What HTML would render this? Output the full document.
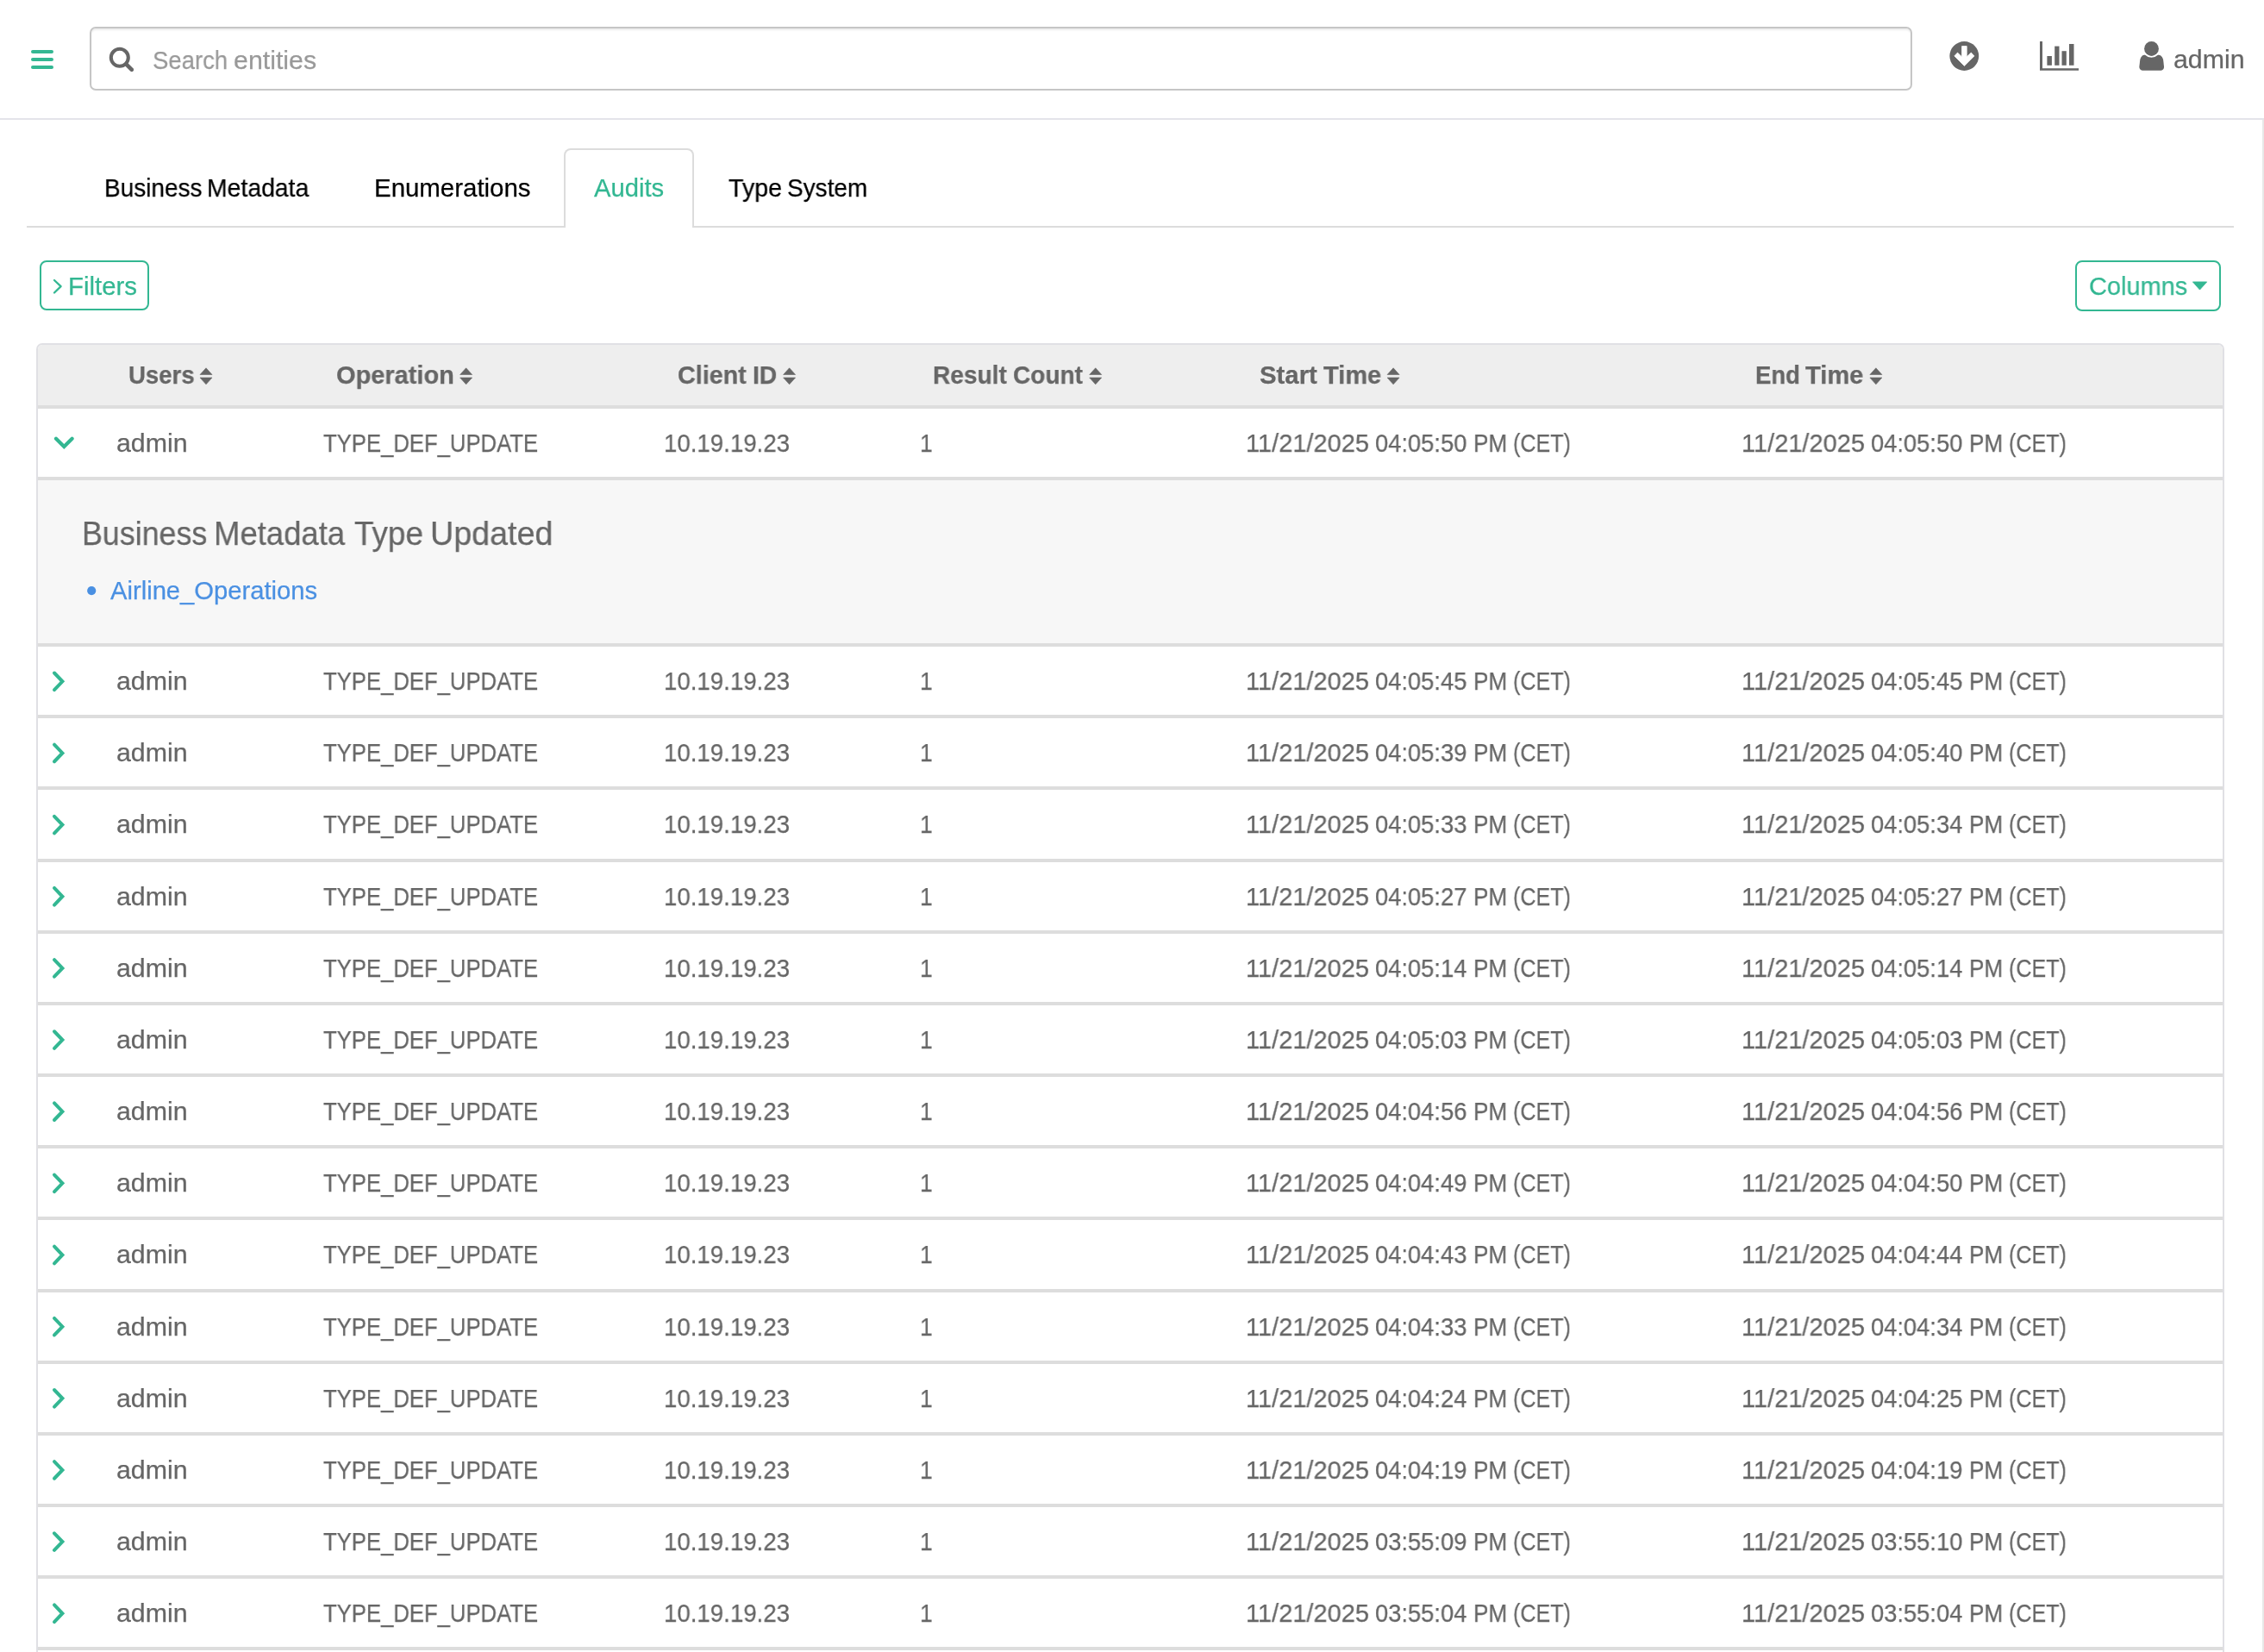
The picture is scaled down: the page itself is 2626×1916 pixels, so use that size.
<!DOCTYPE html>
<html><head><meta charset="utf-8"><title>Audits</title>
<style>
html,body{margin:0;padding:0;width:2626px;height:1916px;overflow:hidden;background:#fff}
body{position:relative;font-family:"Liberation Sans",sans-serif}
.a{position:absolute}
.t{position:absolute;line-height:0;white-space:pre;transform-origin:0 0;will-change:transform;-webkit-text-stroke:0.25px currentColor}
svg{position:absolute;left:0;top:0}
</style></head><body>
<div class="a" style="left:0px;top:137px;width:2626px;height:2px;background:#e4e4ea"></div>
<div class="a" style="left:2624px;top:139px;width:2px;height:1777px;background:#e8e8e8"></div>
<div class="a" style="left:35.7px;top:58px;width:26.1px;height:4.3px;background:#33b792;border-radius:2px"></div>
<div class="a" style="left:35.7px;top:66.8px;width:26.1px;height:4.3px;background:#33b792;border-radius:2px"></div>
<div class="a" style="left:35.7px;top:75.6px;width:26.1px;height:4.3px;background:#33b792;border-radius:2px"></div>
<div class="a" style="left:104px;top:31.4px;width:2114px;height:74px;box-sizing:border-box;border:2px solid #c6c6c6;border-radius:7px;background:#fff;box-shadow:inset 0 2px 2px rgba(0,0,0,.075)"></div>
<div class="a" style="left:31px;top:262px;width:2560px;height:2px;background:#dcdcdc"></div>
<div class="a" style="left:654px;top:172px;width:151px;height:92px;box-sizing:border-box;border:2px solid #dcdcdc;border-bottom:0;border-radius:8px 8px 0 0;background:#fff"></div>
<div class="a" style="left:46px;top:302px;width:127px;height:58.4px;box-sizing:border-box;border:2px solid #33b792;border-radius:8px"></div>
<div class="a" style="left:2407.2px;top:302px;width:168.60000000000036px;height:58.69999999999999px;box-sizing:border-box;border:2px solid #33b792;border-radius:8px"></div>
<div class="a" style="left:42px;top:398px;width:2538px;height:1528px;box-sizing:border-box;border:2px solid #e0e0e4;border-bottom:0;border-radius:7px 7px 0 0;background:#fff"></div>
<div class="a" style="left:44px;top:400px;width:2534px;height:70px;background:#eee;border-radius:5px 5px 0 0"></div>
<div class="a" style="left:44px;top:470px;width:2534px;height:4px;background:#ddd"></div>
<div class="a" style="left:44px;top:553px;width:2534px;height:4px;background:#ddd"></div>
<div class="a" style="left:44px;top:557px;width:2534px;height:189px;background:#f7f7f7"></div>
<div class="a" style="left:44px;top:746px;width:2534px;height:4px;background:#ddd"></div>
<div class="a" style="left:44px;top:829.3px;width:2534px;height:4px;background:#ddd"></div>
<div class="a" style="left:44px;top:912.45px;width:2534px;height:4px;background:#ddd"></div>
<div class="a" style="left:44px;top:995.6px;width:2534px;height:4px;background:#ddd"></div>
<div class="a" style="left:44px;top:1078.75px;width:2534px;height:4px;background:#ddd"></div>
<div class="a" style="left:44px;top:1161.9px;width:2534px;height:4px;background:#ddd"></div>
<div class="a" style="left:44px;top:1245.05px;width:2534px;height:4px;background:#ddd"></div>
<div class="a" style="left:44px;top:1328.2px;width:2534px;height:4px;background:#ddd"></div>
<div class="a" style="left:44px;top:1411.35px;width:2534px;height:4px;background:#ddd"></div>
<div class="a" style="left:44px;top:1494.5px;width:2534px;height:4px;background:#ddd"></div>
<div class="a" style="left:44px;top:1577.65px;width:2534px;height:4px;background:#ddd"></div>
<div class="a" style="left:44px;top:1660.8px;width:2534px;height:4px;background:#ddd"></div>
<div class="a" style="left:44px;top:1743.95px;width:2534px;height:4px;background:#ddd"></div>
<div class="a" style="left:44px;top:1827.1px;width:2534px;height:4px;background:#ddd"></div>
<div class="a" style="left:44px;top:1910.25px;width:2534px;height:4px;background:#ddd"></div>
<svg width="2626" height="1916" viewBox="0 0 2626 1916">
<circle cx="138.8" cy="66.8" r="10" fill="none" stroke="#666" stroke-width="4.1"/>
<line x1="146.3" y1="74.3" x2="152.8" y2="80.8" stroke="#666" stroke-width="4.6" stroke-linecap="round"/>
<circle cx="2278.3" cy="65" r="16.9" fill="#666"/>
<path d="M2275.6 53.6 L2275.6 65.9 L2270.5 61.1 L2266.9 64.9 L2278.4 76.4 L2289.9 64.9 L2286.3 61.1 L2281.2 65.9 L2281.2 53.6 Z" fill="#fff" stroke="#fff" stroke-width="0.8" stroke-linejoin="round"/>
<path d="M2366 48 H2369 V79.2 H2411 V81.8 H2366 Z" fill="#666"/>
<rect x="2374.4" y="65" width="5.5" height="10.8" fill="#666"/>
<rect x="2383.2" y="53.6" width="5.3" height="22.2" fill="#666"/>
<rect x="2391.5" y="59.2" width="5.3" height="16.6" fill="#666"/>
<rect x="2400" y="51" width="5.5" height="24.8" fill="#666"/>
<path d="M2488.5 63.6 H2502.5 C2506.5 63.6 2508.6 66.5 2509.2 70 L2510 77 C2510.3 80 2508.5 81.8 2505.5 81.8 H2486 C2483 81.8 2481.1 80 2481.4 77 L2482.2 70 C2482.9 66.5 2484.5 63.6 2488.5 63.6 Z" fill="#666"/>
<circle cx="2495.5" cy="56.4" r="9.4" fill="none" stroke="#fff" stroke-width="2"/>
<circle cx="2495.5" cy="56.4" r="8.4" fill="#666"/>
<path d="M63 325 L70.6 332.2 L63 339.5" fill="none" stroke="#33b792" stroke-width="2.3" stroke-linecap="round" stroke-linejoin="round"/>
<path d="M2543.4 326.9 H2559.7 L2551.5 336.1 Z" fill="#33b792" stroke="#33b792" stroke-width="0.8" stroke-linejoin="round"/>
<path d="M232 434.5 L239 426.8 L246 434.5 Z M232 438 L239 445.8 L246 438 Z" fill="#666" stroke="#666" stroke-width="0.6" stroke-linejoin="round"/>
<path d="M533.6 434.5 L540.6 426.8 L547.6 434.5 Z M533.6 438 L540.6 445.8 L547.6 438 Z" fill="#666" stroke="#666" stroke-width="0.6" stroke-linejoin="round"/>
<path d="M908.6 434.5 L915.6 426.8 L922.6 434.5 Z M908.6 438 L915.6 445.8 L922.6 438 Z" fill="#666" stroke="#666" stroke-width="0.6" stroke-linejoin="round"/>
<path d="M1263.7 434.5 L1270.7 426.8 L1277.7 434.5 Z M1263.7 438 L1270.7 445.8 L1277.7 438 Z" fill="#666" stroke="#666" stroke-width="0.6" stroke-linejoin="round"/>
<path d="M1609.1 434.5 L1616.1 426.8 L1623.1 434.5 Z M1609.1 438 L1616.1 445.8 L1623.1 438 Z" fill="#666" stroke="#666" stroke-width="0.6" stroke-linejoin="round"/>
<path d="M2168.9 434.5 L2175.9 426.8 L2182.9 434.5 Z M2168.9 438 L2175.9 445.8 L2182.9 438 Z" fill="#666" stroke="#666" stroke-width="0.6" stroke-linejoin="round"/>
<path d="M65 508.7 L74.3 518 L83.6 508.7" fill="none" stroke="#33b792" stroke-width="4.2" stroke-linecap="round" stroke-linejoin="miter"/>
<path d="M63 780.50 L72.4 790.30 L63 800.10" fill="none" stroke="#33b792" stroke-width="4" stroke-linecap="round"/>
<path d="M63 863.65 L72.4 873.45 L63 883.25" fill="none" stroke="#33b792" stroke-width="4" stroke-linecap="round"/>
<path d="M63 946.80 L72.4 956.60 L63 966.40" fill="none" stroke="#33b792" stroke-width="4" stroke-linecap="round"/>
<path d="M63 1029.95 L72.4 1039.75 L63 1049.55" fill="none" stroke="#33b792" stroke-width="4" stroke-linecap="round"/>
<path d="M63 1113.10 L72.4 1122.90 L63 1132.70" fill="none" stroke="#33b792" stroke-width="4" stroke-linecap="round"/>
<path d="M63 1196.25 L72.4 1206.05 L63 1215.85" fill="none" stroke="#33b792" stroke-width="4" stroke-linecap="round"/>
<path d="M63 1279.40 L72.4 1289.20 L63 1299.00" fill="none" stroke="#33b792" stroke-width="4" stroke-linecap="round"/>
<path d="M63 1362.55 L72.4 1372.35 L63 1382.15" fill="none" stroke="#33b792" stroke-width="4" stroke-linecap="round"/>
<path d="M63 1445.70 L72.4 1455.50 L63 1465.30" fill="none" stroke="#33b792" stroke-width="4" stroke-linecap="round"/>
<path d="M63 1528.85 L72.4 1538.65 L63 1548.45" fill="none" stroke="#33b792" stroke-width="4" stroke-linecap="round"/>
<path d="M63 1612.00 L72.4 1621.80 L63 1631.60" fill="none" stroke="#33b792" stroke-width="4" stroke-linecap="round"/>
<path d="M63 1695.15 L72.4 1704.95 L63 1714.75" fill="none" stroke="#33b792" stroke-width="4" stroke-linecap="round"/>
<path d="M63 1778.30 L72.4 1788.10 L63 1797.90" fill="none" stroke="#33b792" stroke-width="4" stroke-linecap="round"/>
<path d="M63 1861.45 L72.4 1871.25 L63 1881.05" fill="none" stroke="#33b792" stroke-width="4" stroke-linecap="round"/>
<circle cx="106.2" cy="685.1" r="5.1" fill="#4a90e2"/>
</svg>
<div class="t" style="left:177.34px;top:69.78px;font-size:29.2px;color:#999;transform:scaleX(0.9415)">Search</div>
<div class="t" style="left:271.25px;top:69.78px;font-size:29.2px;color:#999;transform:scaleX(1.0398)">entities</div>
<div class="t" style="left:2520.75px;top:68.78px;font-size:29.2px;color:#666;transform:scaleX(1.0393)">admin</div>
<div class="t" style="left:120.61px;top:217.78px;font-size:29.2px;color:#000;transform:scaleX(0.9585)">Business</div>
<div class="t" style="left:240.48px;top:217.78px;font-size:29.2px;color:#000;transform:scaleX(0.9720)">Metadata</div>
<div class="t" style="left:433.70px;top:217.78px;font-size:29.2px;color:#000;transform:scaleX(1.0081)">Enumerations</div>
<div class="t" style="left:689.40px;top:217.78px;font-size:29.2px;color:#33b792;transform:scaleX(0.9995)">Audits</div>
<div class="t" style="left:845.15px;top:217.78px;font-size:29.2px;color:#000;transform:scaleX(0.9811)">Type</div>
<div class="t" style="left:913.43px;top:217.78px;font-size:29.2px;color:#000;transform:scaleX(0.9576)">System</div>
<div class="t" style="left:78.50px;top:331.78px;font-size:29.2px;color:#33b792;transform:scaleX(1.0079)">Filters</div>
<div class="t" style="left:2422.54px;top:331.78px;font-size:29.2px;color:#33b792;transform:scaleX(0.9926)">Columns</div>
<div class="t" style="left:149.31px;top:434.78px;font-size:29.2px;color:#666;transform:scaleX(0.9438);font-weight:700">Users</div>
<div class="t" style="left:390.09px;top:434.78px;font-size:29.2px;color:#666;transform:scaleX(0.9928);font-weight:700">Operation</div>
<div class="t" style="left:786.10px;top:434.78px;font-size:29.2px;color:#666;transform:scaleX(0.9843);font-weight:700">Client</div>
<div class="t" style="left:872.63px;top:434.78px;font-size:29.2px;color:#666;transform:scaleX(0.9673);font-weight:700">ID</div>
<div class="t" style="left:1082.04px;top:434.78px;font-size:29.2px;color:#666;transform:scaleX(0.9625);font-weight:700">Result</div>
<div class="t" style="left:1175.02px;top:434.78px;font-size:29.2px;color:#666;transform:scaleX(0.9608);font-weight:700">Count</div>
<div class="t" style="left:1460.54px;top:434.78px;font-size:29.2px;color:#666;transform:scaleX(1.0056);font-weight:700">Start</div>
<div class="t" style="left:1534.60px;top:434.78px;font-size:29.2px;color:#666;transform:scaleX(0.9941);font-weight:700">Time</div>
<div class="t" style="left:2035.68px;top:434.78px;font-size:29.2px;color:#666;transform:scaleX(0.9406);font-weight:700">End</div>
<div class="t" style="left:2094.00px;top:434.78px;font-size:29.2px;color:#666;transform:scaleX(0.9970);font-weight:700">Time</div>
<div class="t" style="left:134.55px;top:514.18px;font-size:29.2px;color:#666;transform:scaleX(1.0393)">admin</div>
<div class="t" style="left:374.70px;top:514.18px;font-size:29.2px;color:#666;transform:scaleX(0.8792)">TYPE_DEF_UPDATE</div>
<div class="t" style="left:770.07px;top:514.18px;font-size:29.2px;color:#666;transform:scaleX(0.9468)">10.19.19.23</div>
<div class="t" style="left:1066.94px;top:514.18px;font-size:29.2px;color:#666;transform:scaleX(0.9069)">1</div>
<div class="t" style="left:1445.29px;top:514.18px;font-size:29.2px;color:#666;transform:scaleX(0.9931)">11/21/2025</div>
<div class="t" style="left:1595.05px;top:514.18px;font-size:29.2px;color:#666;transform:scaleX(0.9355)">04:05:50</div>
<div class="t" style="left:1708.56px;top:514.18px;font-size:29.2px;color:#666;transform:scaleX(0.8925)">PM</div>
<div class="t" style="left:1755.12px;top:514.18px;font-size:29.2px;color:#666;transform:scaleX(0.8604)">(CET)</div>
<div class="t" style="left:2020.49px;top:514.18px;font-size:29.2px;color:#666;transform:scaleX(0.9931)">11/21/2025</div>
<div class="t" style="left:2170.25px;top:514.18px;font-size:29.2px;color:#666;transform:scaleX(0.9355)">04:05:50</div>
<div class="t" style="left:2283.76px;top:514.18px;font-size:29.2px;color:#666;transform:scaleX(0.8925)">PM</div>
<div class="t" style="left:2330.32px;top:514.18px;font-size:29.2px;color:#666;transform:scaleX(0.8604)">(CET)</div>
<div class="t" style="left:134.55px;top:790.18px;font-size:29.2px;color:#666;transform:scaleX(1.0393)">admin</div>
<div class="t" style="left:374.70px;top:790.18px;font-size:29.2px;color:#666;transform:scaleX(0.8792)">TYPE_DEF_UPDATE</div>
<div class="t" style="left:770.07px;top:790.18px;font-size:29.2px;color:#666;transform:scaleX(0.9468)">10.19.19.23</div>
<div class="t" style="left:1066.94px;top:790.18px;font-size:29.2px;color:#666;transform:scaleX(0.9069)">1</div>
<div class="t" style="left:1445.29px;top:790.18px;font-size:29.2px;color:#666;transform:scaleX(0.9931)">11/21/2025</div>
<div class="t" style="left:1595.05px;top:790.18px;font-size:29.2px;color:#666;transform:scaleX(0.9355)">04:05:45</div>
<div class="t" style="left:1708.56px;top:790.18px;font-size:29.2px;color:#666;transform:scaleX(0.8925)">PM</div>
<div class="t" style="left:1755.12px;top:790.18px;font-size:29.2px;color:#666;transform:scaleX(0.8604)">(CET)</div>
<div class="t" style="left:2020.49px;top:790.18px;font-size:29.2px;color:#666;transform:scaleX(0.9931)">11/21/2025</div>
<div class="t" style="left:2170.25px;top:790.18px;font-size:29.2px;color:#666;transform:scaleX(0.9355)">04:05:45</div>
<div class="t" style="left:2283.76px;top:790.18px;font-size:29.2px;color:#666;transform:scaleX(0.8925)">PM</div>
<div class="t" style="left:2330.32px;top:790.18px;font-size:29.2px;color:#666;transform:scaleX(0.8604)">(CET)</div>
<div class="t" style="left:134.55px;top:873.33px;font-size:29.2px;color:#666;transform:scaleX(1.0393)">admin</div>
<div class="t" style="left:374.70px;top:873.33px;font-size:29.2px;color:#666;transform:scaleX(0.8792)">TYPE_DEF_UPDATE</div>
<div class="t" style="left:770.07px;top:873.33px;font-size:29.2px;color:#666;transform:scaleX(0.9468)">10.19.19.23</div>
<div class="t" style="left:1066.94px;top:873.33px;font-size:29.2px;color:#666;transform:scaleX(0.9069)">1</div>
<div class="t" style="left:1445.29px;top:873.33px;font-size:29.2px;color:#666;transform:scaleX(0.9931)">11/21/2025</div>
<div class="t" style="left:1595.05px;top:873.33px;font-size:29.2px;color:#666;transform:scaleX(0.9355)">04:05:39</div>
<div class="t" style="left:1708.56px;top:873.33px;font-size:29.2px;color:#666;transform:scaleX(0.8925)">PM</div>
<div class="t" style="left:1755.12px;top:873.33px;font-size:29.2px;color:#666;transform:scaleX(0.8604)">(CET)</div>
<div class="t" style="left:2020.49px;top:873.33px;font-size:29.2px;color:#666;transform:scaleX(0.9931)">11/21/2025</div>
<div class="t" style="left:2170.25px;top:873.33px;font-size:29.2px;color:#666;transform:scaleX(0.9355)">04:05:40</div>
<div class="t" style="left:2283.76px;top:873.33px;font-size:29.2px;color:#666;transform:scaleX(0.8925)">PM</div>
<div class="t" style="left:2330.32px;top:873.33px;font-size:29.2px;color:#666;transform:scaleX(0.8604)">(CET)</div>
<div class="t" style="left:134.55px;top:956.48px;font-size:29.2px;color:#666;transform:scaleX(1.0393)">admin</div>
<div class="t" style="left:374.70px;top:956.48px;font-size:29.2px;color:#666;transform:scaleX(0.8792)">TYPE_DEF_UPDATE</div>
<div class="t" style="left:770.07px;top:956.48px;font-size:29.2px;color:#666;transform:scaleX(0.9468)">10.19.19.23</div>
<div class="t" style="left:1066.94px;top:956.48px;font-size:29.2px;color:#666;transform:scaleX(0.9069)">1</div>
<div class="t" style="left:1445.29px;top:956.48px;font-size:29.2px;color:#666;transform:scaleX(0.9931)">11/21/2025</div>
<div class="t" style="left:1595.05px;top:956.48px;font-size:29.2px;color:#666;transform:scaleX(0.9355)">04:05:33</div>
<div class="t" style="left:1708.56px;top:956.48px;font-size:29.2px;color:#666;transform:scaleX(0.8925)">PM</div>
<div class="t" style="left:1755.12px;top:956.48px;font-size:29.2px;color:#666;transform:scaleX(0.8604)">(CET)</div>
<div class="t" style="left:2020.49px;top:956.48px;font-size:29.2px;color:#666;transform:scaleX(0.9931)">11/21/2025</div>
<div class="t" style="left:2170.25px;top:956.48px;font-size:29.2px;color:#666;transform:scaleX(0.9355)">04:05:34</div>
<div class="t" style="left:2283.76px;top:956.48px;font-size:29.2px;color:#666;transform:scaleX(0.8925)">PM</div>
<div class="t" style="left:2330.32px;top:956.48px;font-size:29.2px;color:#666;transform:scaleX(0.8604)">(CET)</div>
<div class="t" style="left:134.55px;top:1039.63px;font-size:29.2px;color:#666;transform:scaleX(1.0393)">admin</div>
<div class="t" style="left:374.70px;top:1039.63px;font-size:29.2px;color:#666;transform:scaleX(0.8792)">TYPE_DEF_UPDATE</div>
<div class="t" style="left:770.07px;top:1039.63px;font-size:29.2px;color:#666;transform:scaleX(0.9468)">10.19.19.23</div>
<div class="t" style="left:1066.94px;top:1039.63px;font-size:29.2px;color:#666;transform:scaleX(0.9069)">1</div>
<div class="t" style="left:1445.29px;top:1039.63px;font-size:29.2px;color:#666;transform:scaleX(0.9931)">11/21/2025</div>
<div class="t" style="left:1595.05px;top:1039.63px;font-size:29.2px;color:#666;transform:scaleX(0.9355)">04:05:27</div>
<div class="t" style="left:1708.56px;top:1039.63px;font-size:29.2px;color:#666;transform:scaleX(0.8925)">PM</div>
<div class="t" style="left:1755.12px;top:1039.63px;font-size:29.2px;color:#666;transform:scaleX(0.8604)">(CET)</div>
<div class="t" style="left:2020.49px;top:1039.63px;font-size:29.2px;color:#666;transform:scaleX(0.9931)">11/21/2025</div>
<div class="t" style="left:2170.25px;top:1039.63px;font-size:29.2px;color:#666;transform:scaleX(0.9355)">04:05:27</div>
<div class="t" style="left:2283.76px;top:1039.63px;font-size:29.2px;color:#666;transform:scaleX(0.8925)">PM</div>
<div class="t" style="left:2330.32px;top:1039.63px;font-size:29.2px;color:#666;transform:scaleX(0.8604)">(CET)</div>
<div class="t" style="left:134.55px;top:1122.78px;font-size:29.2px;color:#666;transform:scaleX(1.0393)">admin</div>
<div class="t" style="left:374.70px;top:1122.78px;font-size:29.2px;color:#666;transform:scaleX(0.8792)">TYPE_DEF_UPDATE</div>
<div class="t" style="left:770.07px;top:1122.78px;font-size:29.2px;color:#666;transform:scaleX(0.9468)">10.19.19.23</div>
<div class="t" style="left:1066.94px;top:1122.78px;font-size:29.2px;color:#666;transform:scaleX(0.9069)">1</div>
<div class="t" style="left:1445.29px;top:1122.78px;font-size:29.2px;color:#666;transform:scaleX(0.9931)">11/21/2025</div>
<div class="t" style="left:1595.05px;top:1122.78px;font-size:29.2px;color:#666;transform:scaleX(0.9355)">04:05:14</div>
<div class="t" style="left:1708.56px;top:1122.78px;font-size:29.2px;color:#666;transform:scaleX(0.8925)">PM</div>
<div class="t" style="left:1755.12px;top:1122.78px;font-size:29.2px;color:#666;transform:scaleX(0.8604)">(CET)</div>
<div class="t" style="left:2020.49px;top:1122.78px;font-size:29.2px;color:#666;transform:scaleX(0.9931)">11/21/2025</div>
<div class="t" style="left:2170.25px;top:1122.78px;font-size:29.2px;color:#666;transform:scaleX(0.9355)">04:05:14</div>
<div class="t" style="left:2283.76px;top:1122.78px;font-size:29.2px;color:#666;transform:scaleX(0.8925)">PM</div>
<div class="t" style="left:2330.32px;top:1122.78px;font-size:29.2px;color:#666;transform:scaleX(0.8604)">(CET)</div>
<div class="t" style="left:134.55px;top:1205.93px;font-size:29.2px;color:#666;transform:scaleX(1.0393)">admin</div>
<div class="t" style="left:374.70px;top:1205.93px;font-size:29.2px;color:#666;transform:scaleX(0.8792)">TYPE_DEF_UPDATE</div>
<div class="t" style="left:770.07px;top:1205.93px;font-size:29.2px;color:#666;transform:scaleX(0.9468)">10.19.19.23</div>
<div class="t" style="left:1066.94px;top:1205.93px;font-size:29.2px;color:#666;transform:scaleX(0.9069)">1</div>
<div class="t" style="left:1445.29px;top:1205.93px;font-size:29.2px;color:#666;transform:scaleX(0.9931)">11/21/2025</div>
<div class="t" style="left:1595.05px;top:1205.93px;font-size:29.2px;color:#666;transform:scaleX(0.9355)">04:05:03</div>
<div class="t" style="left:1708.56px;top:1205.93px;font-size:29.2px;color:#666;transform:scaleX(0.8925)">PM</div>
<div class="t" style="left:1755.12px;top:1205.93px;font-size:29.2px;color:#666;transform:scaleX(0.8604)">(CET)</div>
<div class="t" style="left:2020.49px;top:1205.93px;font-size:29.2px;color:#666;transform:scaleX(0.9931)">11/21/2025</div>
<div class="t" style="left:2170.25px;top:1205.93px;font-size:29.2px;color:#666;transform:scaleX(0.9355)">04:05:03</div>
<div class="t" style="left:2283.76px;top:1205.93px;font-size:29.2px;color:#666;transform:scaleX(0.8925)">PM</div>
<div class="t" style="left:2330.32px;top:1205.93px;font-size:29.2px;color:#666;transform:scaleX(0.8604)">(CET)</div>
<div class="t" style="left:134.55px;top:1289.08px;font-size:29.2px;color:#666;transform:scaleX(1.0393)">admin</div>
<div class="t" style="left:374.70px;top:1289.08px;font-size:29.2px;color:#666;transform:scaleX(0.8792)">TYPE_DEF_UPDATE</div>
<div class="t" style="left:770.07px;top:1289.08px;font-size:29.2px;color:#666;transform:scaleX(0.9468)">10.19.19.23</div>
<div class="t" style="left:1066.94px;top:1289.08px;font-size:29.2px;color:#666;transform:scaleX(0.9069)">1</div>
<div class="t" style="left:1445.29px;top:1289.08px;font-size:29.2px;color:#666;transform:scaleX(0.9931)">11/21/2025</div>
<div class="t" style="left:1595.05px;top:1289.08px;font-size:29.2px;color:#666;transform:scaleX(0.9355)">04:04:56</div>
<div class="t" style="left:1708.56px;top:1289.08px;font-size:29.2px;color:#666;transform:scaleX(0.8925)">PM</div>
<div class="t" style="left:1755.12px;top:1289.08px;font-size:29.2px;color:#666;transform:scaleX(0.8604)">(CET)</div>
<div class="t" style="left:2020.49px;top:1289.08px;font-size:29.2px;color:#666;transform:scaleX(0.9931)">11/21/2025</div>
<div class="t" style="left:2170.25px;top:1289.08px;font-size:29.2px;color:#666;transform:scaleX(0.9355)">04:04:56</div>
<div class="t" style="left:2283.76px;top:1289.08px;font-size:29.2px;color:#666;transform:scaleX(0.8925)">PM</div>
<div class="t" style="left:2330.32px;top:1289.08px;font-size:29.2px;color:#666;transform:scaleX(0.8604)">(CET)</div>
<div class="t" style="left:134.55px;top:1372.23px;font-size:29.2px;color:#666;transform:scaleX(1.0393)">admin</div>
<div class="t" style="left:374.70px;top:1372.23px;font-size:29.2px;color:#666;transform:scaleX(0.8792)">TYPE_DEF_UPDATE</div>
<div class="t" style="left:770.07px;top:1372.23px;font-size:29.2px;color:#666;transform:scaleX(0.9468)">10.19.19.23</div>
<div class="t" style="left:1066.94px;top:1372.23px;font-size:29.2px;color:#666;transform:scaleX(0.9069)">1</div>
<div class="t" style="left:1445.29px;top:1372.23px;font-size:29.2px;color:#666;transform:scaleX(0.9931)">11/21/2025</div>
<div class="t" style="left:1595.05px;top:1372.23px;font-size:29.2px;color:#666;transform:scaleX(0.9355)">04:04:49</div>
<div class="t" style="left:1708.56px;top:1372.23px;font-size:29.2px;color:#666;transform:scaleX(0.8925)">PM</div>
<div class="t" style="left:1755.12px;top:1372.23px;font-size:29.2px;color:#666;transform:scaleX(0.8604)">(CET)</div>
<div class="t" style="left:2020.49px;top:1372.23px;font-size:29.2px;color:#666;transform:scaleX(0.9931)">11/21/2025</div>
<div class="t" style="left:2170.25px;top:1372.23px;font-size:29.2px;color:#666;transform:scaleX(0.9355)">04:04:50</div>
<div class="t" style="left:2283.76px;top:1372.23px;font-size:29.2px;color:#666;transform:scaleX(0.8925)">PM</div>
<div class="t" style="left:2330.32px;top:1372.23px;font-size:29.2px;color:#666;transform:scaleX(0.8604)">(CET)</div>
<div class="t" style="left:134.55px;top:1455.38px;font-size:29.2px;color:#666;transform:scaleX(1.0393)">admin</div>
<div class="t" style="left:374.70px;top:1455.38px;font-size:29.2px;color:#666;transform:scaleX(0.8792)">TYPE_DEF_UPDATE</div>
<div class="t" style="left:770.07px;top:1455.38px;font-size:29.2px;color:#666;transform:scaleX(0.9468)">10.19.19.23</div>
<div class="t" style="left:1066.94px;top:1455.38px;font-size:29.2px;color:#666;transform:scaleX(0.9069)">1</div>
<div class="t" style="left:1445.29px;top:1455.38px;font-size:29.2px;color:#666;transform:scaleX(0.9931)">11/21/2025</div>
<div class="t" style="left:1595.05px;top:1455.38px;font-size:29.2px;color:#666;transform:scaleX(0.9355)">04:04:43</div>
<div class="t" style="left:1708.56px;top:1455.38px;font-size:29.2px;color:#666;transform:scaleX(0.8925)">PM</div>
<div class="t" style="left:1755.12px;top:1455.38px;font-size:29.2px;color:#666;transform:scaleX(0.8604)">(CET)</div>
<div class="t" style="left:2020.49px;top:1455.38px;font-size:29.2px;color:#666;transform:scaleX(0.9931)">11/21/2025</div>
<div class="t" style="left:2170.25px;top:1455.38px;font-size:29.2px;color:#666;transform:scaleX(0.9355)">04:04:44</div>
<div class="t" style="left:2283.76px;top:1455.38px;font-size:29.2px;color:#666;transform:scaleX(0.8925)">PM</div>
<div class="t" style="left:2330.32px;top:1455.38px;font-size:29.2px;color:#666;transform:scaleX(0.8604)">(CET)</div>
<div class="t" style="left:134.55px;top:1538.53px;font-size:29.2px;color:#666;transform:scaleX(1.0393)">admin</div>
<div class="t" style="left:374.70px;top:1538.53px;font-size:29.2px;color:#666;transform:scaleX(0.8792)">TYPE_DEF_UPDATE</div>
<div class="t" style="left:770.07px;top:1538.53px;font-size:29.2px;color:#666;transform:scaleX(0.9468)">10.19.19.23</div>
<div class="t" style="left:1066.94px;top:1538.53px;font-size:29.2px;color:#666;transform:scaleX(0.9069)">1</div>
<div class="t" style="left:1445.29px;top:1538.53px;font-size:29.2px;color:#666;transform:scaleX(0.9931)">11/21/2025</div>
<div class="t" style="left:1595.05px;top:1538.53px;font-size:29.2px;color:#666;transform:scaleX(0.9355)">04:04:33</div>
<div class="t" style="left:1708.56px;top:1538.53px;font-size:29.2px;color:#666;transform:scaleX(0.8925)">PM</div>
<div class="t" style="left:1755.12px;top:1538.53px;font-size:29.2px;color:#666;transform:scaleX(0.8604)">(CET)</div>
<div class="t" style="left:2020.49px;top:1538.53px;font-size:29.2px;color:#666;transform:scaleX(0.9931)">11/21/2025</div>
<div class="t" style="left:2170.25px;top:1538.53px;font-size:29.2px;color:#666;transform:scaleX(0.9355)">04:04:34</div>
<div class="t" style="left:2283.76px;top:1538.53px;font-size:29.2px;color:#666;transform:scaleX(0.8925)">PM</div>
<div class="t" style="left:2330.32px;top:1538.53px;font-size:29.2px;color:#666;transform:scaleX(0.8604)">(CET)</div>
<div class="t" style="left:134.55px;top:1621.68px;font-size:29.2px;color:#666;transform:scaleX(1.0393)">admin</div>
<div class="t" style="left:374.70px;top:1621.68px;font-size:29.2px;color:#666;transform:scaleX(0.8792)">TYPE_DEF_UPDATE</div>
<div class="t" style="left:770.07px;top:1621.68px;font-size:29.2px;color:#666;transform:scaleX(0.9468)">10.19.19.23</div>
<div class="t" style="left:1066.94px;top:1621.68px;font-size:29.2px;color:#666;transform:scaleX(0.9069)">1</div>
<div class="t" style="left:1445.29px;top:1621.68px;font-size:29.2px;color:#666;transform:scaleX(0.9931)">11/21/2025</div>
<div class="t" style="left:1595.05px;top:1621.68px;font-size:29.2px;color:#666;transform:scaleX(0.9355)">04:04:24</div>
<div class="t" style="left:1708.56px;top:1621.68px;font-size:29.2px;color:#666;transform:scaleX(0.8925)">PM</div>
<div class="t" style="left:1755.12px;top:1621.68px;font-size:29.2px;color:#666;transform:scaleX(0.8604)">(CET)</div>
<div class="t" style="left:2020.49px;top:1621.68px;font-size:29.2px;color:#666;transform:scaleX(0.9931)">11/21/2025</div>
<div class="t" style="left:2170.25px;top:1621.68px;font-size:29.2px;color:#666;transform:scaleX(0.9355)">04:04:25</div>
<div class="t" style="left:2283.76px;top:1621.68px;font-size:29.2px;color:#666;transform:scaleX(0.8925)">PM</div>
<div class="t" style="left:2330.32px;top:1621.68px;font-size:29.2px;color:#666;transform:scaleX(0.8604)">(CET)</div>
<div class="t" style="left:134.55px;top:1704.83px;font-size:29.2px;color:#666;transform:scaleX(1.0393)">admin</div>
<div class="t" style="left:374.70px;top:1704.83px;font-size:29.2px;color:#666;transform:scaleX(0.8792)">TYPE_DEF_UPDATE</div>
<div class="t" style="left:770.07px;top:1704.83px;font-size:29.2px;color:#666;transform:scaleX(0.9468)">10.19.19.23</div>
<div class="t" style="left:1066.94px;top:1704.83px;font-size:29.2px;color:#666;transform:scaleX(0.9069)">1</div>
<div class="t" style="left:1445.29px;top:1704.83px;font-size:29.2px;color:#666;transform:scaleX(0.9931)">11/21/2025</div>
<div class="t" style="left:1595.05px;top:1704.83px;font-size:29.2px;color:#666;transform:scaleX(0.9355)">04:04:19</div>
<div class="t" style="left:1708.56px;top:1704.83px;font-size:29.2px;color:#666;transform:scaleX(0.8925)">PM</div>
<div class="t" style="left:1755.12px;top:1704.83px;font-size:29.2px;color:#666;transform:scaleX(0.8604)">(CET)</div>
<div class="t" style="left:2020.49px;top:1704.83px;font-size:29.2px;color:#666;transform:scaleX(0.9931)">11/21/2025</div>
<div class="t" style="left:2170.25px;top:1704.83px;font-size:29.2px;color:#666;transform:scaleX(0.9355)">04:04:19</div>
<div class="t" style="left:2283.76px;top:1704.83px;font-size:29.2px;color:#666;transform:scaleX(0.8925)">PM</div>
<div class="t" style="left:2330.32px;top:1704.83px;font-size:29.2px;color:#666;transform:scaleX(0.8604)">(CET)</div>
<div class="t" style="left:134.55px;top:1787.98px;font-size:29.2px;color:#666;transform:scaleX(1.0393)">admin</div>
<div class="t" style="left:374.70px;top:1787.98px;font-size:29.2px;color:#666;transform:scaleX(0.8792)">TYPE_DEF_UPDATE</div>
<div class="t" style="left:770.07px;top:1787.98px;font-size:29.2px;color:#666;transform:scaleX(0.9468)">10.19.19.23</div>
<div class="t" style="left:1066.94px;top:1787.98px;font-size:29.2px;color:#666;transform:scaleX(0.9069)">1</div>
<div class="t" style="left:1445.29px;top:1787.98px;font-size:29.2px;color:#666;transform:scaleX(0.9931)">11/21/2025</div>
<div class="t" style="left:1595.05px;top:1787.98px;font-size:29.2px;color:#666;transform:scaleX(0.9355)">03:55:09</div>
<div class="t" style="left:1708.56px;top:1787.98px;font-size:29.2px;color:#666;transform:scaleX(0.8925)">PM</div>
<div class="t" style="left:1755.12px;top:1787.98px;font-size:29.2px;color:#666;transform:scaleX(0.8604)">(CET)</div>
<div class="t" style="left:2020.49px;top:1787.98px;font-size:29.2px;color:#666;transform:scaleX(0.9931)">11/21/2025</div>
<div class="t" style="left:2170.25px;top:1787.98px;font-size:29.2px;color:#666;transform:scaleX(0.9355)">03:55:10</div>
<div class="t" style="left:2283.76px;top:1787.98px;font-size:29.2px;color:#666;transform:scaleX(0.8925)">PM</div>
<div class="t" style="left:2330.32px;top:1787.98px;font-size:29.2px;color:#666;transform:scaleX(0.8604)">(CET)</div>
<div class="t" style="left:134.55px;top:1871.13px;font-size:29.2px;color:#666;transform:scaleX(1.0393)">admin</div>
<div class="t" style="left:374.70px;top:1871.13px;font-size:29.2px;color:#666;transform:scaleX(0.8792)">TYPE_DEF_UPDATE</div>
<div class="t" style="left:770.07px;top:1871.13px;font-size:29.2px;color:#666;transform:scaleX(0.9468)">10.19.19.23</div>
<div class="t" style="left:1066.94px;top:1871.13px;font-size:29.2px;color:#666;transform:scaleX(0.9069)">1</div>
<div class="t" style="left:1445.29px;top:1871.13px;font-size:29.2px;color:#666;transform:scaleX(0.9931)">11/21/2025</div>
<div class="t" style="left:1595.05px;top:1871.13px;font-size:29.2px;color:#666;transform:scaleX(0.9355)">03:55:04</div>
<div class="t" style="left:1708.56px;top:1871.13px;font-size:29.2px;color:#666;transform:scaleX(0.8925)">PM</div>
<div class="t" style="left:1755.12px;top:1871.13px;font-size:29.2px;color:#666;transform:scaleX(0.8604)">(CET)</div>
<div class="t" style="left:2020.49px;top:1871.13px;font-size:29.2px;color:#666;transform:scaleX(0.9931)">11/21/2025</div>
<div class="t" style="left:2170.25px;top:1871.13px;font-size:29.2px;color:#666;transform:scaleX(0.9355)">03:55:04</div>
<div class="t" style="left:2283.76px;top:1871.13px;font-size:29.2px;color:#666;transform:scaleX(0.8925)">PM</div>
<div class="t" style="left:2330.32px;top:1871.13px;font-size:29.2px;color:#666;transform:scaleX(0.8604)">(CET)</div>
<div class="t" style="left:94.90px;top:618.70px;font-size:38.0px;color:#666;transform:scaleX(0.9418)">Business</div>
<div class="t" style="left:247.95px;top:618.70px;font-size:38.0px;color:#666;transform:scaleX(0.9601)">Metadata</div>
<div class="t" style="left:410.82px;top:618.70px;font-size:38.0px;color:#666;transform:scaleX(0.9707)">Type</div>
<div class="t" style="left:498.75px;top:618.70px;font-size:38.0px;color:#666;transform:scaleX(0.9909)">Updated</div>
<div class="t" style="left:127.70px;top:685.08px;font-size:29.2px;color:#4a90e2;transform:scaleX(1.0000)">Airline_Operations</div>
</body></html>
